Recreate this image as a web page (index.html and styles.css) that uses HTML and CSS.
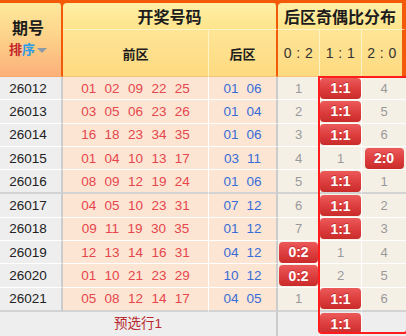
FILE: index.html
```html
<!DOCTYPE html>
<html lang="zh-CN">
<head>
<meta charset="utf-8">
<title>后区奇偶比分布</title>
<link rel="stylesheet" href="styles.css">
</head>
<body>
<div class="board">
  <div class="h-qh"><span class="qh">期号</span><span class="sort"><b class="pai">排</b><b class="xu">序</b><i class="tri"></i></span></div>
  <div class="h-a h-kj">开奖号码</div>
  <div class="h-a h-jo">后区奇偶比分布</div>
  <div class="h-b hq">前区</div>
  <div class="h-b hh">后区</div>
  <div class="h-b r">0 : 2</div>
  <div class="h-b r">1 : 1</div>
  <div class="h-b r last">2 : 0</div>

  <div class="d qi">26012</div>
  <div class="d qian"><span>01</span><span>02</span><span>09</span><span>22</span><span>25</span></div>
  <div class="d hou"><span>01</span><span>06</span></div>
  <div class="d st">1</div>
  <div class="d st"><span class="badge wide">1:1</span></div>
  <div class="d st last">4</div>

  <div class="d qi">26013</div>
  <div class="d qian"><span>03</span><span>05</span><span>06</span><span>23</span><span>26</span></div>
  <div class="d hou"><span>01</span><span>04</span></div>
  <div class="d st">2</div>
  <div class="d st"><span class="badge wide">1:1</span></div>
  <div class="d st last">5</div>

  <div class="d qi">26014</div>
  <div class="d qian"><span>16</span><span>18</span><span>23</span><span>34</span><span>35</span></div>
  <div class="d hou"><span>01</span><span>06</span></div>
  <div class="d st">3</div>
  <div class="d st"><span class="badge wide">1:1</span></div>
  <div class="d st last">6</div>

  <div class="d qi">26015</div>
  <div class="d qian"><span>01</span><span>04</span><span>10</span><span>13</span><span>17</span></div>
  <div class="d hou"><span>03</span><span>11</span></div>
  <div class="d st">4</div>
  <div class="d st">1</div>
  <div class="d st last"><span class="badge">2:0</span></div>

  <div class="d qi end">26016</div>
  <div class="d qian end"><span>08</span><span>09</span><span>12</span><span>19</span><span>24</span></div>
  <div class="d hou end"><span>01</span><span>06</span></div>
  <div class="d st end">5</div>
  <div class="d st end"><span class="badge wide">1:1</span></div>
  <div class="d st last end">1</div>

  <div class="d qi">26017</div>
  <div class="d qian"><span>04</span><span>05</span><span>10</span><span>23</span><span>31</span></div>
  <div class="d hou"><span>07</span><span>12</span></div>
  <div class="d st">6</div>
  <div class="d st"><span class="badge wide">1:1</span></div>
  <div class="d st last">2</div>

  <div class="d qi">26018</div>
  <div class="d qian"><span>09</span><span>11</span><span>19</span><span>30</span><span>35</span></div>
  <div class="d hou"><span>01</span><span>12</span></div>
  <div class="d st">7</div>
  <div class="d st"><span class="badge wide">1:1</span></div>
  <div class="d st last">3</div>

  <div class="d qi">26019</div>
  <div class="d qian"><span>12</span><span>13</span><span>14</span><span>16</span><span>31</span></div>
  <div class="d hou"><span>04</span><span>12</span></div>
  <div class="d st"><span class="badge">0:2</span></div>
  <div class="d st">1</div>
  <div class="d st last">4</div>

  <div class="d qi">26020</div>
  <div class="d qian"><span>01</span><span>10</span><span>21</span><span>23</span><span>29</span></div>
  <div class="d hou"><span>10</span><span>12</span></div>
  <div class="d st"><span class="badge">0:2</span></div>
  <div class="d st">2</div>
  <div class="d st last">5</div>

  <div class="d qi end">26021</div>
  <div class="d qian end"><span>05</span><span>08</span><span>12</span><span>14</span><span>17</span></div>
  <div class="d hou end"><span>04</span><span>05</span></div>
  <div class="d st end">1</div>
  <div class="d st end"><span class="badge wide">1:1</span></div>
  <div class="d st last end">6</div>

  <div class="foot pre">预选行1</div>
  <div class="foot fs"></div>
  <div class="foot fs"><span class="badge wide">1:1</span></div>
  <div class="foot fs last"></div>

  <div class="hl"></div>
</div>
</body>
</html>
```
FILE: styles.css
```css
* {
  box-sizing: border-box;
  margin: 0;
  padding: 0;
}

html,
body {
  width: 406px;
  height: 336px;
  overflow: hidden;
  background: #ffffff;
}

body {
  font-family: "Liberation Sans", "Noto Sans CJK SC", sans-serif;
  color: #222222;
}

.board {
  position: relative;
  display: grid;
  grid-template-columns: 63px 146px 69px 42px 42px 44px;
  grid-template-rows: 27px 47px repeat(4, 23.3px) 24.3px repeat(4, 23.3px) 24.3px 24px;
  padding-top: 3px;
  height: 336px;
  background: #f25a0a;
}

/* ---------- header ---------- */
.h-qh {
  grid-column: 1;
  grid-row: 1 / 3;
  display: flex;
  flex-direction: column;
  align-items: center;
  justify-content: center;
  gap: 1px;
  padding-right: 5px;
  border-right: 2px solid #f25a0a;
  border-bottom: 1px solid #f3a868;
  border-top-right-radius: 4px;
  background: linear-gradient(#fde99c 0%, #fdd68c 40%, #fcb07a 100%);
}

.qh {
  font-size: 16px;
  font-weight: bold;
  line-height: 20px;
  color: #1c1c1c;
}

.sort {
  display: flex;
  align-items: center;
  font-size: 13px;
  line-height: 20px;
}

.pai {
  color: #c3262c;
}

.xu {
  color: #2b9ce6;
}

.tri {
  width: 0;
  height: 0;
  margin-left: 2px;
  border-left: 5px solid transparent;
  border-right: 5px solid transparent;
  border-top: 5px solid #8c9aa6;
}

.h-a {
  display: flex;
  align-items: center;
  justify-content: center;
  font-size: 16px;
  font-weight: bold;
  color: #1c1c1c;
  border-bottom: 1px solid #fff4c8;
  border-radius: 4px 4px 0 0;
  background: linear-gradient(#fff0a6, #fde48c);
}

.h-kj {
  grid-column: 2 / 4;
  border-right: 2px solid #f25a0a;
}

.h-jo {
  grid-column: 4 / 7;
  border-right: 4px solid #f25a0a;
}

.h-b {
  display: flex;
  align-items: center;
  justify-content: center;
  font-size: 13px;
  font-weight: bold;
  color: #1c1c1c;
  border-right: 1px solid #fff4c8;
  border-bottom: 1px solid #f6c27c;
  background: linear-gradient(#fee596, #fdda80);
}

.h-b.hh {
  border-right: 2px solid #f25a0a;
}

.h-b.r {
  font-size: 14px;
  font-weight: normal;
  letter-spacing: 0.5px;
  color: #333333;
}

.h-b.last {
  border-right: 4px solid #f25a0a;
}

/* ---------- data rows ---------- */
.d {
  display: flex;
  align-items: center;
  justify-content: center;
  border-bottom: 1px solid #ffffff;
}

.d.end {
  border-bottom: 2px solid #d3d3d3;
}

.qi {
  padding-right: 5px;
  font-size: 13.5px;
  color: #222222;
  background: #eeeeee;
  border-right: 2px solid #cccccc;
}

.qian {
  gap: 8.4px;
  font-size: 13.5px;
  color: #e6464c;
  background: #fde5d3;
  border-right: 1px solid #ffffff;
}

.hou {
  gap: 8px;
  font-size: 13.5px;
  color: #386cd6;
  background: #fde5d3;
  border-right: 2px solid #cccccc;
}

.st {
  font-size: 13px;
  color: #999999;
  background: #f5f0e6;
  border-right: 1px solid #ffffff;
}

.st.last {
  border-right: 0;
}

.badge {
  display: flex;
  align-items: center;
  justify-content: center;
  width: 39px;
  height: 21px;
  border-radius: 4px;
  font-size: 14px;
  font-weight: bold;
  color: #ffffff;
  text-shadow: 0 -1px 0 rgba(120, 0, 0, 0.35);
  background: linear-gradient(#ec5a5a 0%, #dc3c3c 55%, #c92b2b 100%);
}

.badge.wide {
  width: 41px;
}

/* ---------- footer ---------- */
.foot {
  display: flex;
  align-items: center;
  justify-content: center;
  background: #eeeeee;
}

.pre {
  grid-column: 1 / 4;
  padding-bottom: 3px;
  font-size: 13.5px;
  color: #b8282d;
  border-right: 2px solid #cccccc;
}

.fs {
  border-right: 1px solid #ffffff;
}

.fs.last {
  border-right: 0;
}

/* ---------- highlighted column frame ---------- */
.hl {
  position: absolute;
  grid-column: 5;
  grid-row: 3 / 14;
  top: -1px;
  bottom: 2px;
  left: -2px;
  right: -2px;
  border: 2px solid #ff1c1c;
  border-radius: 0 0 4px 4px;
  z-index: 2;
  pointer-events: none;
}
```
